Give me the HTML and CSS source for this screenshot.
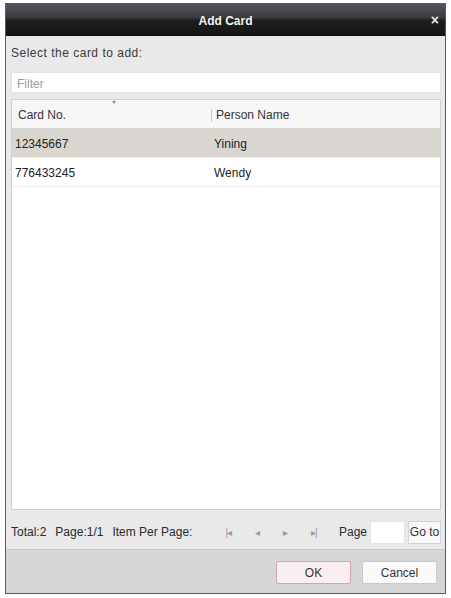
FILE: index.html
```html
<!DOCTYPE html>
<html lang="en">
<head>
    <meta charset="UTF-8">
    <title>Add Card</title>
    <link rel="stylesheet" href="styles.css">
</head>
<body>
    <div class="dialog">
        <div class="title-bar">
            <span class="title">Add Card</span>
            <span class="close">&#215;</span>
        </div>

        <div class="content">
            <p class="hint">Select the card to add:</p>
            <input class="filter" type="text" placeholder="Filter">

            <div class="table">
                <div class="row head">
                    <div class="cell col-card">Card No.</div>
                    <div class="cell col-name">Person Name</div>
                    <span class="sort"></span>
                </div>
                <div class="row selected">
                    <div class="cell col-card">12345667</div>
                    <div class="cell col-name">Yining</div>
                </div>
                <div class="row">
                    <div class="cell col-card">776433245</div>
                    <div class="cell col-name">Wendy</div>
                </div>
            </div>

            <div class="pager">
                <span>Total:2</span>
                <span>Page:1/1</span>
                <span>Item Per Page:</span>
                <div class="nav">
                    <span>|&#9666;</span>
                    <span>&#9666;</span>
                    <span>&#9656;</span>
                    <span>&#9656;|</span>
                </div>
                <span class="page-label">Page</span>
                <input class="page-input" type="text">
                <button class="goto">Go to</button>
            </div>
        </div>

        <div class="footer">
            <button class="btn ok">OK</button>
            <button class="btn">Cancel</button>
        </div>
    </div>
</body>
</html>
```

FILE: styles.css
```css
* {
    margin: 0;
    padding: 0;
    box-sizing: border-box;
}

body {
    font-family: 'Liberation Sans', Arial, sans-serif;
    font-size: 12px;
    color: #333;
    background: #fff;
    padding: 3px 5px 4px 5px;
}

.dialog {
    width: 441px;
    height: 591px;
    display: flex;
    flex-direction: column;
    background: #e9e9e9;
    border: 1px solid #5a5a5a;
    border-top: none;
}

.title-bar {
    height: 33px;
    display: flex;
    align-items: center;
    justify-content: center;
    position: relative;
    padding-top: 3px;
    background: linear-gradient(#55585d 0%, #3a3c40 45%, #1d1d1f 55%, #161617 100%);
    border-bottom: 1px solid #0c0c0c;
}

.title {
    color: #f4f4f4;
    font-weight: bold;
    font-size: 12px;
}

.close {
    position: absolute;
    right: 6px;
    top: 9px;
    color: #e8e8e8;
    font-weight: bold;
    font-size: 14px;
}

.content {
    flex: 1;
    display: flex;
    flex-direction: column;
    padding: 0 4px 0 5px;
}

.hint {
    margin: 9px 0 0 0;
    height: 17px;
    line-height: 17px;
    letter-spacing: 0.5px;
    color: #3a3a3a;
}

.filter {
    margin-top: 10px;
    height: 21px;
    border: 1px solid #e2e2e2;
    background: #fff;
    font: inherit;
    padding: 2px 5px 0 5px;
    color: #333;
}

.filter::placeholder {
    color: #9a9a9a;
}

.table {
    margin-top: 6px;
    flex: 1;
    background: #fff;
    border: 1px solid #d0d0d0;
}

.row {
    display: flex;
    height: 29px;
    align-items: center;
    padding-top: 2px;
    border-bottom: 1px solid #ececec;
    color: #222;
}

.row.head {
    position: relative;
    background: #f7f7f7;
    border-bottom: 1px solid #d4d4d4;
    color: #333;
}

.row.selected {
    background: #d9d6d0;
}

.cell {
    padding-left: 3px;
}

.head .cell {
    padding-left: 6px;
}

.col-card {
    width: 199px;
}

.col-name {
    flex: 1;
}

.head .col-name {
    border-left: 1px solid #c8c8c8;
    padding-left: 4px;
    line-height: 13px;
}

/* sort marker on the first column */
.sort {
    position: absolute;
    left: 100px;
    top: 1px;
    width: 0;
    height: 0;
    border-left: 2px solid transparent;
    border-right: 2px solid transparent;
    border-top: 3px solid #8a8a8a;
}

.pager {
    height: 39px;
    display: flex;
    align-items: center;
    gap: 9px;
    padding-top: 5px;
    color: #2a2a2a;
}

.nav {
    display: flex;
    gap: 24px;
    margin-left: 24px;
    color: #9a9a9a;
    font-size: 10px;
    letter-spacing: -1px;
}

.page-label {
    margin-left: auto;
}

.page-input {
    width: 35px;
    height: 23px;
    margin-left: -6px;
    border: 1px solid #e4e4e4;
    background: #fff;
}

.goto {
    height: 23px;
    width: 33px;
    margin-left: -6px;
    border: 1px solid #d4d4d4;
    background: #f8f8f8;
    font: inherit;
    color: #333;
}

.footer {
    height: 44px;
    display: flex;
    align-items: center;
    justify-content: flex-end;
    gap: 11px;
    padding: 2px 8px 0 0;
    background: #d6d6d6;
    border-top: 1px solid #c8c8c8;
}

.btn {
    width: 75px;
    height: 23px;
    font: inherit;
    color: #333;
    background: #fafafa;
    border: 1px solid #c9c9c9;
    border-radius: 2px;
}

.btn.ok {
    background: #fbeef0;
    border-color: #d9a3ac;
}
```
